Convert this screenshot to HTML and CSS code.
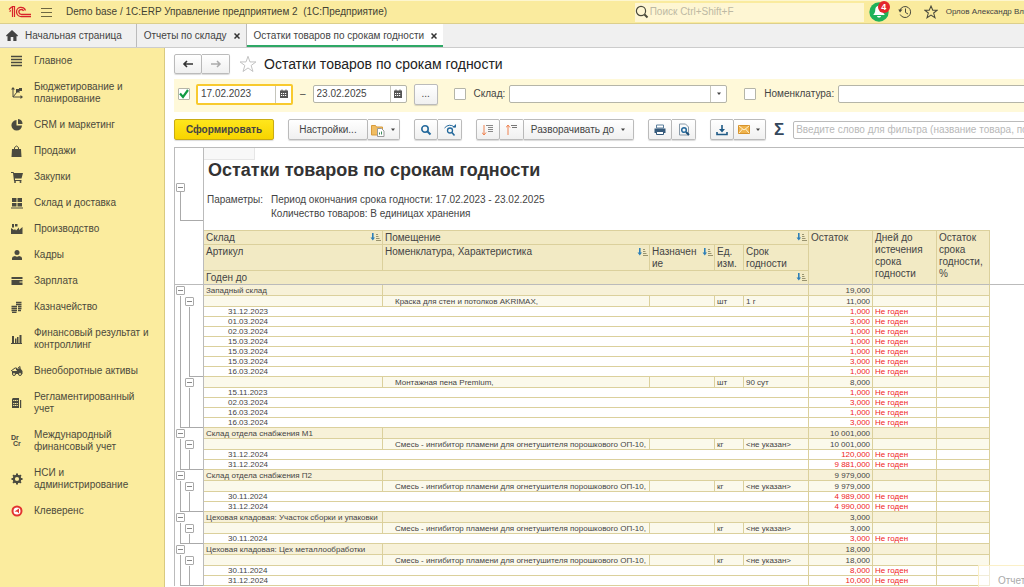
FILE: index.html
```html
<!DOCTYPE html>
<html lang="ru">
<head>
  <meta charset="UTF-8">
  <meta name="viewport" content="width=device-width, initial-scale=1">
  <title>Остатки товаров по срокам годности</title>
  <link rel="stylesheet" href="styles.css">
</head>
<body>
  <svg class="sprite" aria-hidden="true">
    <symbol id="sort" viewBox="0 0 11 8">
      <path d="M2 0h1.6v4.500H5L2.800 7.500.5 4.500H2z" fill="#2f80b8"/>
      <path d="M6 1.500h2M6 3.500h2.500M6 5.500h3.500M6 7.500h5" stroke="#98936f" fill="none"/>
    </symbol>
    <symbol id="calendar" viewBox="0 0 10 10">
      <path d="M1 1.500h1.500V.5h1v1h3v-1h1v1H9V9H1z" fill="#555"/>
      <path d="M2 4.500h6M2 6.500h6" stroke="#fff" stroke-dasharray="1.200 .8"/>
    </symbol>
    <symbol id="caret" viewBox="0 0 6 4">
      <path d="M1 .5h4L3 3z" fill="#444"/>
    </symbol>
    <symbol id="star" viewBox="0 0 20 20">
      <path d="M10 1.500l2.200 6.200h6.600l-5.300 4 2 6.600L10 14.400l-5.500 3.900 2-6.600-5.300-4h6.600z" fill="none" stroke="currentColor"/>
    </symbol>
  </svg>

  <div class="app">
    <!-- Шапка -->
    <header class="topbar">
      <svg class="logo" width="24" height="14" viewBox="0 0 24 14" fill="none" stroke="#d8232a">
        <path d="M1 4.500L3.500 2h1v10M1.500 6.500l1.500-1M6.500 12V1.500H4" stroke-width="1.200"/>
        <path d="M17.500 5.500A4.600 4.600 0 1 0 13.500 11.500H23" stroke-width="1.300"/>
        <path d="M15.500 6A2.400 2.400 0 1 0 13.500 9.300H23" stroke-width="1.300"/>
      </svg>
      <button class="plain menu" aria-label="Меню">
        <svg width="11" height="11" viewBox="0 0 11 11"><path d="M0 1.500h11M0 5.500h11M0 9.500h11" stroke="#6d6742"/></svg>
      </button>
      <span class="app-name">Demo base / 1С:ERP Управление предприятием 2 &nbsp;(1С:Предприятие)</span>
      <div class="search">
        <svg width="14" height="14" viewBox="0 0 14 14" fill="none" stroke="#4a4a3c"><circle cx="6" cy="6" r="4.600" stroke-width="1.200"/><path d="M9.500 9.500l3 3" stroke-width="2"/></svg>
        <input type="search" placeholder="Поиск Ctrl+Shift+F" aria-label="Поиск">
      </div>
      <button class="plain bell" aria-label="Уведомления">
        <svg width="20" height="20" viewBox="0 0 20 20">
          <circle cx="10" cy="10" r="9.700" fill="#1fb25a"/>
          <path d="M10 3.500c3 .5 3.800 2.500 3.800 5 0 2 1 3 2 4.500H4.200c1-1.500 2-2.500 2-4.500 0-2.500.8-4.500 3.800-5zM8 14h4c-.3 2-3.700 2-4 0z" fill="#fff"/>
        </svg>
        <span class="badge">4</span>
      </button>
      <button class="plain" aria-label="История">
        <svg width="14" height="14" viewBox="0 0 14 14" fill="none" stroke="#4a4a3c"><path d="M2 5a5.500 5.500 0 1 1 .2 4.500M7.500 3.500v4l2.500 1.500"/><path d="M.3 4.500h4.200L2 7.500z" fill="#4a4a3c" stroke="none"/></svg>
      </button>
      <button class="plain" aria-label="Избранное">
        <svg class="fav" width="14" height="14" viewBox="0 0 20 20"><path d="M10 1.500l2.500 6h6.300l-5 4 1.900 6.600L10 14.400l-5.700 3.700 1.900-6.600-5-4h6.300z" fill="none" stroke="#4a4a3c" stroke-width="1.500"/></svg>
      </button>
      <span class="user">Орлов Александр Вл</span>
    </header>

    <!-- Вкладки -->
    <nav class="tabs">
      <a href="#" class="tab tab-home">
        <svg width="12" height="11" viewBox="0 0 12 11"><path d="M6 0l6 5.500-.8.900L10.500 6v5H7.300V7H4.700v4H1.500V6l-.7.400L0 5.500z" fill="#444"/></svg>
        Начальная страница
      </a>
      <a href="#" class="tab">Отчеты по складу <svg class="close" width="6" height="6" viewBox="0 0 6 6"><path d="M.5.5l5 5M5.500.5l-5 5" stroke="#333" stroke-width="1.500"/></svg></a>
      <a href="#" class="tab active">Остатки товаров по срокам годности <svg class="close" width="6" height="6" viewBox="0 0 6 6"><path d="M.5.5l5 5M5.500.5l-5 5" stroke="#333" stroke-width="1.500"/></svg></a>
    </nav>

    <div class="work">
      <!-- Разделы -->
      <nav class="sidebar">
        <a href="#"><svg viewBox="0 0 12 12"><path d="M0 1.500h11M0 4.500h11M0 7.500h11M0 10.500h11" stroke="#4a4a3f" stroke-width="1.500"/></svg><span>Главное</span></a>
        <a href="#"><svg viewBox="0 0 12 12"><path d="M2 1v9h9M2 10l4-5h3" stroke="#4a4a3f" fill="none"/><path d="M0 2.500L2 0l2 2.500zM9.500 8l2.500 2-2.500 2zM5 2h3V1h3v3H8v1H5z" fill="#4a4a3f"/></svg><span>Бюджетирование и планирование</span></a>
        <a href="#"><svg viewBox="0 0 12 12"><path d="M5.500 1v5.500H11A5.300 5.300 0 1 1 5.500 1z" fill="#4a4a3f"/><path d="M7 0a5 5 0 0 1 4.500 5H7z" fill="#4a4a3f"/></svg><span>CRM и маркетинг</span></a>
        <a href="#"><svg viewBox="0 0 12 12"><path d="M1 4h9l.5 8H.5z" fill="#4a4a3f"/><path d="M3.500 6V2.500q2-3 4 0V6" stroke="#4a4a3f" fill="none"/></svg><span>Продажи</span></a>
        <a href="#"><svg viewBox="0 0 12 12"><path d="M0 1h2.500l.5 1h9l-1.500 5.500H4V9h6.500v1H3L2 2H0z" fill="#4a4a3f"/><circle cx="4" cy="11" r="1" fill="#4a4a3f"/><circle cx="9.500" cy="11" r="1" fill="#4a4a3f"/></svg><span>Закупки</span></a>
        <a href="#"><svg viewBox="0 0 12 12"><path d="M1 1h4.500v4H1zM6.500 1H11v4H6.500zM1 6h4.500v3.500H1zM6.500 6H11v3.500H6.500zM0 10.500h12v1H0z" fill="#4a4a3f"/></svg><span>Склад и доставка</span></a>
        <a href="#"><svg viewBox="0 0 12 12"><path d="M0 11V5l3 2 1-1 1 1.500 3-3V7l3.500-3v7zM1 1h2v3.500H1zM4 1h2.500v2.500H4z" fill="#4a4a3f"/></svg><span>Производство</span></a>
        <a href="#"><svg viewBox="0 0 12 12"><circle cx="6" cy="3.500" r="2.500" fill="#4a4a3f"/><path d="M1 11V9q0-1.500 3-2 2 1.500 4 0 3 .5 3 2v2z" fill="#4a4a3f"/></svg><span>Кадры</span></a>
        <a href="#"><svg viewBox="0 0 12 12"><path d="M.5 2h11v2H.5zM.5 5h11v1.500h-3v1h3v2.500H.5z" fill="#4a4a3f"/></svg><span>Зарплата</span></a>
        <a href="#"><svg viewBox="0 0 12 12"><path d="M5 1.500h5.500M5 3.500h5.500M7 5.500h3.500M7 7.500h3.500M7 9.500h3M.5 5.500H6M.5 7.500H6M.5 9.500H6M1 11.500h4.500" stroke="#4a4a3f" stroke-width="1.300"/></svg><span>Казначейство</span></a>
        <a href="#"><svg viewBox="0 0 12 12"><path d="M1 3h2v7H1zM4 5.500h1.500V10H4zM6 4h1.500v6H6zM8.500 2h2v8h-2zM0 10h11v1H0z" fill="#4a4a3f"/></svg><span>Финансовый результат и контроллинг</span></a>
        <a href="#"><svg viewBox="0 0 12 12"><path d="M0 6l4-3h1.500v2L9 4V1.500L7 3" stroke="#4a4a3f" fill="none"/><path d="M1 6h5V3.500h3.500L11.500 6v3H1z" fill="#4a4a3f"/><circle cx="3" cy="9" r="1.500" fill="#fbec9e" stroke="#4a4a3f"/><circle cx="9" cy="9" r="1.500" fill="#fbec9e" stroke="#4a4a3f"/></svg><span>Внеоборотные активы</span></a>
        <a href="#"><svg viewBox="0 0 12 12"><path d="M1 2l1-1h6v10H1zM9 3h1.200v8H9z" fill="#4a4a3f"/><path d="M2.200 3.500h4.600M2.200 6.500h4.600M2.200 8.500h4.600" stroke="#fbec9e" stroke-dasharray="1.200 .5"/></svg><span>Регламентированный учет</span></a>
        <a href="#"><svg viewBox="0 0 12 12" class="drcr"><text x="0" y="5">Dr</text><text x="2" y="11">Cr</text></svg><span>Международный финансовый учет</span></a>
        <a href="#"><svg viewBox="0 0 12 12"><circle cx="6" cy="6" r="3.200" fill="none" stroke="#4a4a3f" stroke-width="2.200"/><path d="M6 .5v2M6 9.500v2M.5 6h2M9.500 6h2M2.100 2.100l1.400 1.400M8.500 8.500l1.400 1.400M2.100 9.900l1.400-1.400M8.500 3.500l1.400-1.400" stroke="#4a4a3f" stroke-width="2"/></svg><span>НСИ и администрирование</span></a>
        <a href="#"><svg viewBox="0 0 12 12"><circle cx="6" cy="6" r="4.500" fill="#fff" stroke="#e23430" stroke-width="2"/><path d="M3.500 6.500L8 3.500v5L6.300 6.800z" fill="#e23430"/></svg><span>Клеверенс</span></a>
      </nav>

      <main class="main">
        <div class="heading">
          <div class="group">
            <button class="btn" aria-label="Назад"><svg width="12" height="8" viewBox="0 0 12 8"><path d="M11 4H2M5 1L2 4l3 3" fill="none" stroke="#333" stroke-width="1.600"/></svg></button>
            <button class="btn" aria-label="Вперед"><svg width="12" height="8" viewBox="0 0 12 8"><path d="M1 4h9M7 1l3 3-3 3" fill="none" stroke="#aaa" stroke-width="1.500"/></svg></button>
          </div>
          <svg class="big-star" width="18" height="18"><use href="#star"/></svg>
          <h1>Остатки товаров по срокам годности</h1>
        </div>

        <!-- Отборы -->
        <div class="filters">
          <input type="checkbox" class="check" aria-label="Период" checked>
          <div class="field date focused">
            <input type="text" value="17.02.2023" aria-label="Начало периода" autofocus>
            <button aria-label="Календарь"><svg width="10" height="10"><use href="#calendar"/></svg></button>
          </div>
          <span class="dash">–</span>
          <div class="field date">
            <input type="text" value="23.02.2025" aria-label="Конец периода">
            <button aria-label="Календарь"><svg width="10" height="10"><use href="#calendar"/></svg></button>
          </div>
          <button class="btn dots">...</button>
          <input type="checkbox" class="check" id="use-store">
          <label for="use-store">Склад:</label>
          <div class="field combo">
            <select aria-label="Склад"><option></option></select>
            <span class="arrow"><svg width="6" height="4"><use href="#caret"/></svg></span>
          </div>
          <input type="checkbox" class="check" id="use-item">
          <label for="use-item">Номенклатура:</label>
          <div class="field combo">
            <select aria-label="Номенклатура"><option></option></select>
          </div>
        </div>

        <!-- Команды -->
        <div class="commands">
          <button class="btn primary">Сформировать</button>
          <div class="group">
            <button class="btn settings">Настройки...</button>
            <button class="btn wide" aria-label="Варианты">
              <svg width="14" height="14" viewBox="0 0 14 14"><path d="M.5 2.500h4l1 1.500h6V12H.5z" fill="#f0bd62" stroke="#d79b3c"/><path d="M6.500 5.500h4l2.500 2.500v5.500H6.500z" fill="#fff" stroke="#999"/><path d="M8.500 11.500v-2M10.500 11.500v-3" stroke="#3c8c5a"/></svg>
              <svg width="6" height="4"><use href="#caret"/></svg>
            </button>
          </div>
          <div class="group">
            <button class="btn" aria-label="Найти"><svg width="12" height="12" viewBox="0 0 12 12" fill="none" stroke="#24699c"><circle cx="5" cy="5" r="3.200" stroke-width="1.600"/><path d="M7.500 7.500l3 3" stroke-width="2"/></svg></button>
            <button class="btn" aria-label="Найти далее"><svg width="14" height="12" viewBox="0 0 14 12" fill="none" stroke="#24699c"><circle cx="7" cy="6.500" r="2.500" stroke-width="1.300"/><path d="M9 8.500l2.500 3" stroke-width="1.600"/><path d="M1.500 4Q6-1 11.500 3"/><path d="M9.500 3.500h3.500V0z" fill="#24699c" stroke="none"/></svg></button>
          </div>
          <div class="group">
            <button class="btn" aria-label="Развернуть"><svg width="12" height="12" viewBox="0 0 12 12" fill="none"><path d="M2 1v10M0 8.500L2 11l2-2.500" stroke="#ee8250"/><path d="M4 1.500h7M6 3.500h5M6 5.500h5M6 7.500h5" stroke="#888"/></svg></button>
            <button class="btn" aria-label="Свернуть"><svg width="12" height="12" viewBox="0 0 12 12" fill="none"><path d="M2 11V1M0 3.500L2 1l2 2.500" stroke="#ee8250"/><path d="M5 1.500h6M6 3.500h5" stroke="#777"/></svg></button>
            <button class="btn expand">Разворачивать до <svg width="6" height="4"><use href="#caret"/></svg></button>
          </div>
          <div class="group">
            <button class="btn" aria-label="Печать"><svg width="12" height="12" viewBox="0 0 12 12"><path d="M2.500 1h7v3h-7z" fill="#fff" stroke="#5b7f9c"/><path d="M.5 4.500h11V9H.5z" fill="#34597a"/><path d="M2.500 7.500h7v3h-7z" fill="#fff" stroke="#34597a"/></svg></button>
            <button class="btn" aria-label="Просмотр"><svg width="12" height="13" viewBox="0 0 12 13" fill="none"><path d="M1.500 1h6l3 3v8h-9z" stroke="#8a9aa8"/><circle cx="6" cy="7" r="2.300" stroke="#24699c" stroke-width="1.500"/><path d="M8 9l3 3" stroke="#1b4f78" stroke-width="2"/></svg></button>
          </div>
          <div class="group">
            <button class="btn" aria-label="Сохранить"><svg width="12" height="12" viewBox="0 0 12 12" fill="none" stroke="#1f5a86"><path d="M6 1v6" stroke-width="1.600"/><path d="M3 5h6L6 8.500z" fill="#1f5a86" stroke="none"/><path d="M1 8v2.500h10V8" stroke-width="1.600"/></svg></button>
            <button class="btn wide" aria-label="Отправить">
              <svg width="12" height="9" viewBox="0 0 12 9"><path d="M.5.5h11v8H.5z" fill="#efb34c" stroke="#d7932c"/><path d="M1 1l5 4 5-4M1 8l3.500-4M11 8L7.500 4" fill="none" stroke="#fff0cd"/></svg>
              <svg width="6" height="4"><use href="#caret"/></svg>
            </button>
          </div>
          <button class="plain sigma" aria-label="Сумма">Σ</button>
          <input type="text" class="quick" placeholder="Введите слово для фильтра (название товара, покупателя и пр.)" aria-label="Фильтр">
        </div>

        <!-- Отчет -->
        <section class="report">
          <div class="report-head">
            <div class="gutter">
              <button class="toggle" aria-label="Свернуть"></button>
              <div class="bracket"></div>
            </div>
            <div class="report-info">
              <div class="cursor-cell"></div>
              <h2>Остатки товаров по срокам годности</h2>
              <dl>
                <dt>Параметры:</dt>
                <dd>Период окончания срока годности: 17.02.2023 - 23.02.2025<br>Количество товаров: В единицах хранения</dd>
              </dl>
            </div>
          </div>

          <table>
            <colgroup>
              <col class="c-tree"><col class="c-store"><col class="c-item"><col class="c-num"><col class="c-unit"><col class="c-num"><col class="c-rest"><col class="c-rest"><col class="c-pct"><col>
            </colgroup>
            <thead>
              <tr class="h1">
                <td class="tree freeze" rowspan="3"></td>
                <th>Склад<svg class="sort"><use href="#sort"/></svg></th>
                <th colspan="4">Помещение<svg class="sort"><use href="#sort"/></svg></th>
                <th rowspan="3" class="tall freeze">Остаток</th>
                <th rowspan="3" class="tall freeze">Дней до истечения срока годности</th>
                <th rowspan="3" class="tall freeze">Остаток срока годности, %</th>
                <td class="rest freeze" rowspan="3"></td>
              </tr>
              <tr class="h2">
                <th>Артикул</th>
                <th>Номенклатура, Характеристика<svg class="sort"><use href="#sort"/></svg></th>
                <th><svg class="sort"><use href="#sort"/></svg>Назначен<br>ие</th>
                <th>Ед. изм.</th>
                <th>Срок годности</th>
              </tr>
              <tr class="h3">
                <th colspan="5" class="freeze">Годен до<svg class="sort"><use href="#sort"/></svg></th>
              </tr>
            </thead>
            <tbody>
              <tr class="store"><td class="tree"><button class="toggle" aria-label="Свернуть"></button></td><td>Западный склад</td><td colspan="4"></td><td>19,000</td><td></td><td></td></tr>
              <tr class="item"><td class="tree"><button class="toggle" aria-label="Свернуть"></button></td><td></td><td>Краска для стен и потолков AKRIMAX,</td><td></td><td>шт</td><td>1 г</td><td>11,000</td><td></td><td></td></tr>
              <tr class="leaf"><td class="tree"></td><td colspan="5">31.12.2023</td><td>1,000</td><td>Не годен</td><td></td></tr>
              <tr class="leaf"><td class="tree"></td><td colspan="5">01.03.2024</td><td>3,000</td><td>Не годен</td><td></td></tr>
              <tr class="leaf"><td class="tree"></td><td colspan="5">02.03.2024</td><td>1,000</td><td>Не годен</td><td></td></tr>
              <tr class="leaf"><td class="tree"></td><td colspan="5">15.03.2024</td><td>1,000</td><td>Не годен</td><td></td></tr>
              <tr class="leaf"><td class="tree"></td><td colspan="5">15.03.2024</td><td>1,000</td><td>Не годен</td><td></td></tr>
              <tr class="leaf"><td class="tree"></td><td colspan="5">15.03.2024</td><td>3,000</td><td>Не годен</td><td></td></tr>
              <tr class="leaf"><td class="tree end-item"></td><td colspan="5">16.03.2024</td><td>1,000</td><td>Не годен</td><td></td></tr>
              <tr class="item"><td class="tree"><button class="toggle" aria-label="Свернуть"></button></td><td></td><td>Монтажная пена Premium,</td><td></td><td>шт</td><td>90 сут</td><td>8,000</td><td></td><td></td></tr>
              <tr class="leaf"><td class="tree"></td><td colspan="5">15.11.2023</td><td>1,000</td><td>Не годен</td><td></td></tr>
              <tr class="leaf"><td class="tree"></td><td colspan="5">02.03.2024</td><td>3,000</td><td>Не годен</td><td></td></tr>
              <tr class="leaf"><td class="tree"></td><td colspan="5">16.03.2024</td><td>1,000</td><td>Не годен</td><td></td></tr>
              <tr class="leaf"><td class="tree end-store"></td><td colspan="5">16.03.2024</td><td>3,000</td><td>Не годен</td><td></td></tr>

              <tr class="store"><td class="tree"><button class="toggle" aria-label="Свернуть"></button></td><td>Склад отдела снабжения М1</td><td colspan="4"></td><td>10 001,000</td><td></td><td></td></tr>
              <tr class="item"><td class="tree"><button class="toggle" aria-label="Свернуть"></button></td><td></td><td>Смесь - ингибитор пламени для огнетушителя порошкового ОП-10,</td><td></td><td>кг</td><td>&lt;не указан&gt;</td><td>10 001,000</td><td></td><td></td></tr>
              <tr class="leaf"><td class="tree"></td><td colspan="5">31.12.2024</td><td>120,000</td><td>Не годен</td><td></td></tr>
              <tr class="leaf"><td class="tree end-store"></td><td colspan="5">31.12.2024</td><td>9 881,000</td><td>Не годен</td><td></td></tr>

              <tr class="store"><td class="tree"><button class="toggle" aria-label="Свернуть"></button></td><td>Склад отдела снабжения П2</td><td colspan="4"></td><td>9 979,000</td><td></td><td></td></tr>
              <tr class="item"><td class="tree"><button class="toggle" aria-label="Свернуть"></button></td><td></td><td>Смесь - ингибитор пламени для огнетушителя порошкового ОП-10,</td><td></td><td>кг</td><td>&lt;не указан&gt;</td><td>9 979,000</td><td></td><td></td></tr>
              <tr class="leaf"><td class="tree"></td><td colspan="5">30.11.2024</td><td>4 989,000</td><td>Не годен</td><td></td></tr>
              <tr class="leaf"><td class="tree end-store"></td><td colspan="5">31.12.2024</td><td>4 990,000</td><td>Не годен</td><td></td></tr>

              <tr class="store"><td class="tree"><button class="toggle" aria-label="Свернуть"></button></td><td>Цеховая кладовая: Участок сборки и упаковки</td><td colspan="4"></td><td>3,000</td><td></td><td></td></tr>
              <tr class="item"><td class="tree"><button class="toggle" aria-label="Свернуть"></button></td><td></td><td>Смесь - ингибитор пламени для огнетушителя порошкового ОП-10,</td><td></td><td>кг</td><td>&lt;не указан&gt;</td><td>3,000</td><td></td><td></td></tr>
              <tr class="leaf"><td class="tree end-store"></td><td colspan="5">30.11.2024</td><td>3,000</td><td>Не годен</td><td></td></tr>

              <tr class="store"><td class="tree"><button class="toggle" aria-label="Свернуть"></button></td><td>Цеховая кладовая: Цех металлообработки</td><td colspan="4"></td><td>18,000</td><td></td><td></td></tr>
              <tr class="item"><td class="tree"><button class="toggle" aria-label="Свернуть"></button></td><td></td><td>Смесь - ингибитор пламени для огнетушителя порошкового ОП-10,</td><td></td><td>кг</td><td>&lt;не указан&gt;</td><td>18,000</td><td></td><td></td></tr>
              <tr class="leaf"><td class="tree"></td><td colspan="5">30.11.2024</td><td>8,000</td><td>Не годен</td><td></td></tr>
              <tr class="leaf"><td class="tree end-store"></td><td colspan="5">31.12.2024</td><td>10,000</td><td>Не годен</td><td></td></tr>
            </tbody>
          </table>
        </section>
      </main>
    </div>

    <div class="toast">Отчет</div>
  </div>
</body>
</html>
```
FILE: styles.css
```css
* {
  box-sizing: border-box;
}
body {
  margin: 0;
  font-family: "Liberation Sans", Arial, sans-serif;
  font-size: 10px;
  line-height: 12px;
  color: #444;
  background: #fff;
}
button, input, select {
  font: inherit;
  color: inherit;
  margin: 0;
}
a {
  color: inherit;
  text-decoration: none;
}
svg {
  flex: none;
}
.sprite {
  display: none;
}
.app {
  position: relative;
  display: flex;
  flex-direction: column;
  height: 100vh;
  overflow: hidden;
}
.plain {
  display: flex;
  padding: 0;
  border: 0;
  background: none;
}

/* шапка */
.topbar {
  display: flex;
  align-items: center;
  flex: none;
  height: 24px;
  padding-left: 8px;
  gap: 12px;
  background: #faeb9e;
  border-top: 1px solid #fdf6cf;
  border-bottom: 1px solid #dccf8c;
  white-space: nowrap;
  overflow: hidden;
}
.menu {
  margin-right: 2px;
  margin-left: -3px;
}
.app-name {
  flex: 1;
  color: #444233;
}
.search {
  display: flex;
  align-items: center;
  width: 229px;
  height: 19px;
  background: #fef6d3;
}
.search input {
  flex: 1;
  min-width: 0;
  padding: 0 1px;
  border: 0;
  background: none;
  outline: none;
}
.search input::placeholder {
  color: #bdb9a3;
}
.bell {
  position: relative;
  margin-left: -7px;
  margin-right: -3px;
}
.badge {
  position: absolute;
  top: -1px;
  right: -1px;
  width: 12px;
  height: 12px;
  border-radius: 50%;
  background: #e3262b;
  color: #fff;
  font-size: 9px;
  font-weight: bold;
}
.user {
  min-width: 78px;
  margin-left: -4px;
  font-size: 8px;
}

/* вкладки */
.tabs {
  display: flex;
  flex: none;
  height: 24px;
  background: #f0f0f0;
  border-bottom: 1px solid #ccc;
}
.tab {
  display: flex;
  align-items: center;
  gap: 7px;
  padding: 0 6px 0 7px;
  border-right: 1px solid #bbb;
}
.tab-home {
  padding-left: 6px;
  padding-right: 14px;
}
.tab.active {
  background: #fff;
  border-right: 0;
  box-shadow: inset 0 -2px #2ea866;
}

.work {
  display: flex;
  flex: 1;
  min-height: 0;
}

/* разделы */
.sidebar {
  flex: none;
  width: 165px;
  background: #fbec9e;
  border-right: 1px solid #d9ca80;
}
.sidebar a {
  display: flex;
  align-items: center;
  gap: 11px;
  padding: 7px 11px;
  color: #4c4a3c;
}
.sidebar svg {
  width: 12px;
  height: 12px;
}
.drcr text {
  font-size: 7px;
  font-weight: bold;
  fill: #4a4a3f;
}

/* форма */
.main {
  flex: 1;
  min-width: 0;
  overflow: hidden;
  padding-left: 9px;
}
.heading {
  display: flex;
  align-items: center;
  height: 31px;
}
h1 {
  margin: 0;
  font-size: 14px;
  line-height: 16px;
  font-weight: normal;
  color: #222;
}
.big-star {
  margin: 0 7px 0 9px;
  color: #bbb;
}
.group {
  display: flex;
  flex: none;
}
.btn {
  display: flex;
  align-items: center;
  justify-content: center;
  flex: none;
  width: 24px;
  height: 21px;
  padding: 0;
  border: 1px solid #bbb;
  border-radius: 2px;
  background: linear-gradient(#fff, #f0f0f0);
  box-shadow: 0 1px 1px rgba(0,0,0,0.15);
}
.group .btn + .btn {
  border-left: 0;
  border-top-left-radius: 0;
  border-bottom-left-radius: 0;
}
.heading .btn {
  width: 28px;
  height: 20px;
}
.filters {
  display: flex;
  align-items: center;
  height: 33px;
  padding: 0 0 3px 4px;
  background: #fff9d9;
  white-space: nowrap;
}
.check {
  appearance: none;
  flex: none;
  width: 12px;
  height: 12px;
  border: 1px solid #b5b5a8;
  border-radius: 1px;
  background: #fff;
}
.check:checked {
  background: #fff url("data:image/svg+xml,%3Csvg xmlns='http://www.w3.org/2000/svg' viewBox='0 0 10 10'%3E%3Cpath d='M1 4.500l3 3.500L9 1' fill='none' stroke='%23119a44' stroke-width='2.200'/%3E%3C/svg%3E");
}
.field {
  display: flex;
  flex: none;
  height: 18px;
  border: 1px solid #b5b5a8;
  border-radius: 2px;
  background: #fff;
}
.field input,
.field select {
  appearance: none;
  flex: 1;
  min-width: 0;
  padding: 0 3px;
  border: 0;
  background: none;
  outline: none;
}
.field button,
.arrow {
  display: flex;
  align-items: center;
  justify-content: center;
  width: 16px;
  padding: 0;
  border: 0;
  border-left: 1px solid #c5c5bb;
  background: none;
}
.date {
  width: 94px;
}
.focused {
  width: 97px;
  height: 21px;
  margin-left: 6px;
  border: 2px solid #f8ca2e;
}
.dash {
  margin: 0 7px;
}
.dots {
  margin: 0 16px 0 7px;
}
.filters label {
  margin: 0 4px 0 8px;
}
.combo {
  width: 218px;
  margin-right: 17px;
}
.commands {
  display: flex;
  align-items: center;
  gap: 14px;
  height: 35px;
}
.commands .wide {
  width: 32px;
  gap: 5px;
}
.commands .primary {
  width: 100px;
  border-color: #c9ab14;
  background: linear-gradient(#ffe61c, #f7d400);
  font-weight: bold;
}
.commands .settings {
  width: 80px;
}
.commands .expand {
  width: 110px;
  gap: 6px;
}
.sigma {
  margin: 0 -5px 0 -6px;
  font-size: 17px;
  line-height: 20px;
  font-weight: bold;
  color: #34475c;
}
.quick {
  flex: none;
  width: 300px;
  height: 18px;
  padding: 0 2px;
  border: 1px solid #bbb;
  border-radius: 2px;
}
.quick::placeholder {
  color: #b8b8b8;
}

/* отчет */
.report {
  border-top: 1px solid #bbb;
  border-left: 1px solid #bbb;
}
.report-head {
  display: flex;
  height: 82px;
}
.gutter {
  flex: none;
  width: 29px;
  padding-top: 35px;
  border-right: 1px solid #bbb;
}
.bracket {
  height: 29px;
  margin-left: 5px;
  border-left: 1px solid #aaa;
  border-bottom: 1px solid #aaa;
}
.toggle {
  display: block;
  width: 9px;
  height: 9px;
  margin-left: 1px;
  padding: 0;
  border: 1px solid #aaa;
  border-radius: 1px;
  background: linear-gradient(#888, #888) center / 5px 1px no-repeat #fff;
}
.cursor-cell {
  width: 51px;
  height: 12px;
  background: #f8f8f8;
  border-right: 1px solid #e6e6e6;
  border-bottom: 1px solid #e6e6e6;
}
h2 {
  margin: 0 0 12px 4px;
  font-size: 18px;
  line-height: 21px;
  color: #333;
}
dl {
  display: flex;
  margin: 0 0 0 3px;
  line-height: 14px;
}
dt {
  width: 64px;
}
dd {
  margin: 0;
}

table {
  width: 100%;
  table-layout: fixed;
  border-collapse: separate;
  border-spacing: 0;
}
.c-tree { width: 29px; }
.c-store { width: 179px; }
.c-item { width: 267px; }
.c-num { width: 65px; }
.c-unit { width: 29px; }
.c-rest { width: 64px; }
.c-pct { width: 53px; }
th, td {
  padding: 0 2px;
  border-right: 1px solid #dbd09c;
  border-bottom: 1px solid #dbd09c;
  white-space: nowrap;
}
th {
  background: #f2eac4;
  font-weight: normal;
  text-align: left;
  vertical-align: top;
  line-height: 12px;
  white-space: normal;
}
.h1 th {
  border-top: 1px solid #dbd09c;
}
.h1 { height: 15px; }
.h2 { height: 26px; }
.h3 { height: 14px; }
.h1 th, .h3 th {
  line-height: 13px;
}
.h2 th {
  padding-top: 1px;
}
.h1 th.tall {
  line-height: 12px;
  padding-top: 1px;
}
.sort {
  float: right;
  width: 11px;
  height: 8px;
  margin: 2px -1px 0 0;
}
thead .freeze {
  border-bottom-color: #bbb;
}
td.rest {
  border-right: 0;
}

tbody {
  font-size: 8px;
  line-height: 8px;
}
tbody td {
  padding-top: 1px;
}
.store, .item {
  line-height: 9px;
}
.store td {
  background: #f7f1d8;
}
.item td {
  background: #fbf9eb;
}
.item td:nth-child(3) {
  padding-left: 12px;
}
.leaf td:nth-child(2) {
  padding-left: 24px;
}
.leaf td {
  height: 10px;
}
.store td:nth-last-child(3),
.item td:nth-last-child(3),
.leaf td:nth-last-child(3) {
  text-align: right;
}
.leaf td:nth-last-child(3),
.leaf td:nth-last-child(2) {
  color: #f01c24;
}

/* дерево группировок */
td.tree {
  padding: 0;
  border-right-color: #bbb;
  border-bottom: 0;
  background: #fff;
}
thead td.tree {
  border-bottom: 1px solid #bbb;
}
.item .tree .toggle {
  margin-left: 10px;
}
.item td.tree {
  background: linear-gradient(#aaa, #aaa) 5px 0 / 1px 100% no-repeat #fff;
}
.leaf td.tree {
  background:
    linear-gradient(#aaa, #aaa) 5px 0 / 1px 100% no-repeat,
    linear-gradient(#aaa, #aaa) 14px 0 / 1px 100% no-repeat;
}
.leaf td.end-item {
  background:
    linear-gradient(#aaa, #aaa) 5px 0 / 1px 100% no-repeat,
    linear-gradient(#aaa, #aaa) 14px 0 / 1px 100% no-repeat,
    linear-gradient(#aaa, #aaa) 14px 100% / 14px 1px no-repeat;
}
.leaf td.end-store {
  background:
    linear-gradient(#aaa, #aaa) 5px 0 / 1px 100% no-repeat,
    linear-gradient(#aaa, #aaa) 14px 0 / 1px 100% no-repeat,
    linear-gradient(#aaa, #aaa) 5px 100% / 23px 1px no-repeat;
}

.toast {
  position: absolute;
  right: 0;
  bottom: 0;
  width: 46px;
  height: 22px;
  padding: 9px 0 0 19px;
  overflow: hidden;
  border-top: 1px solid #fbf0c8;
  border-left: 1px solid #fbf0c8;
  background: rgba(255,255,255,0.6);
  color: #aaa;
}
```
